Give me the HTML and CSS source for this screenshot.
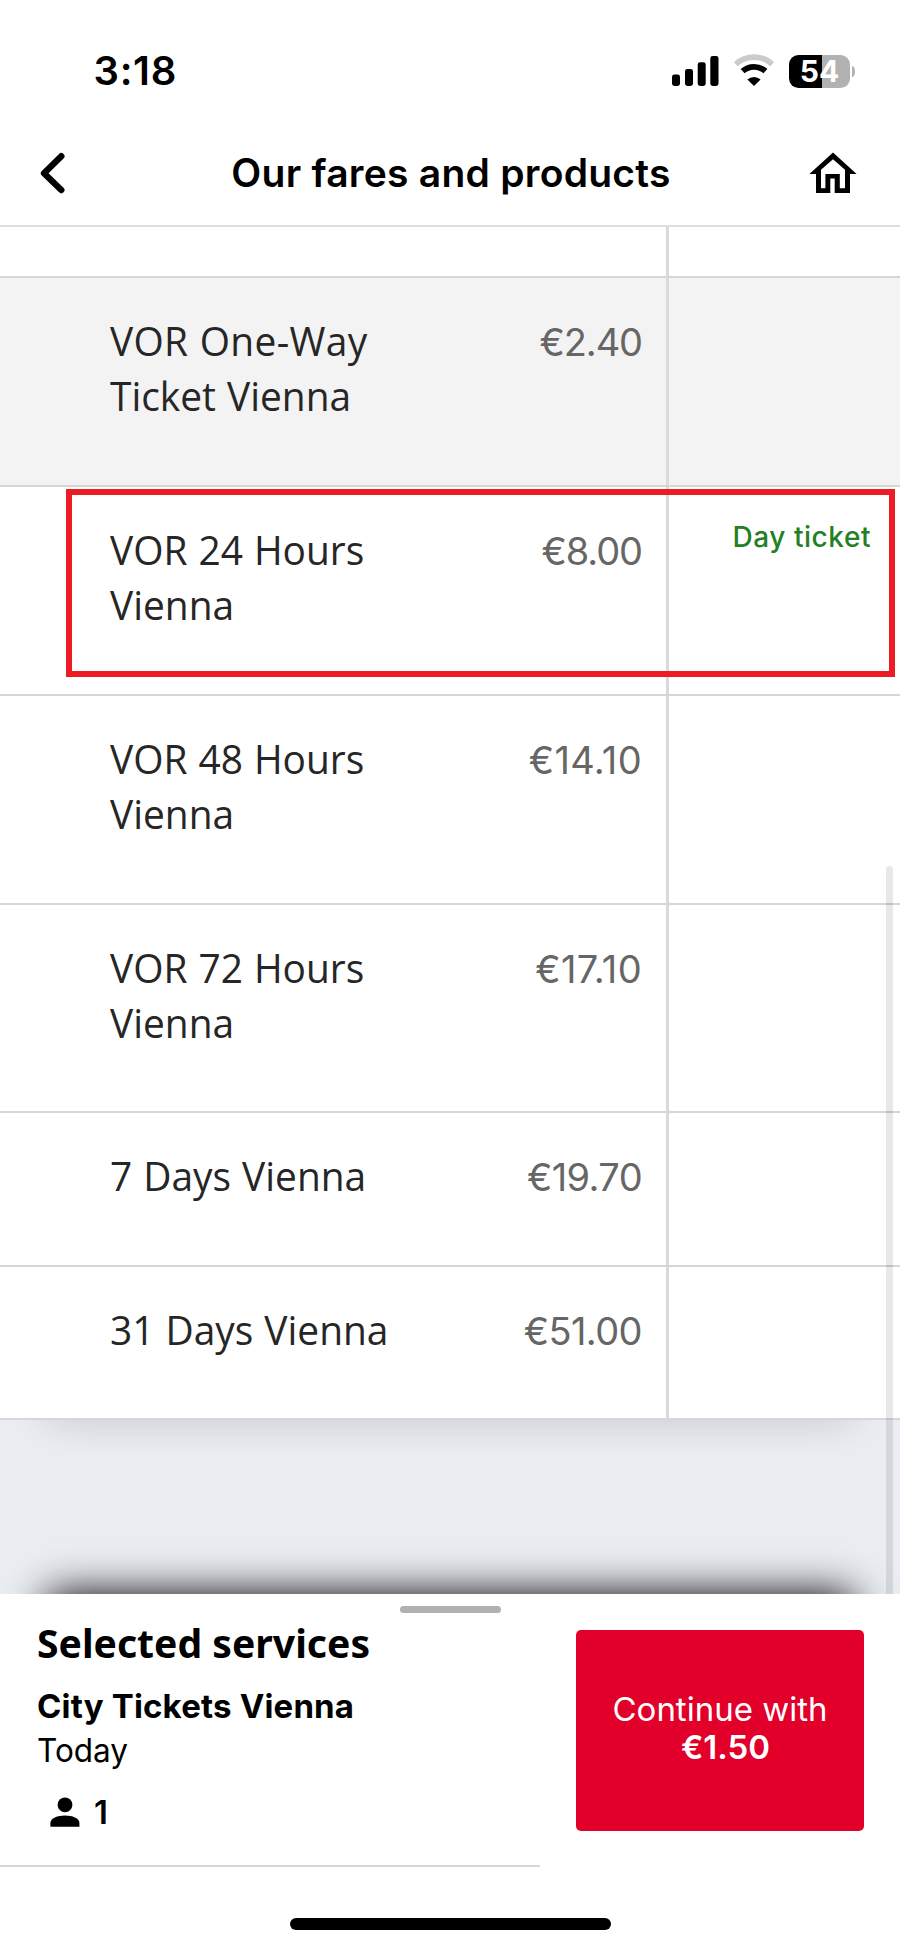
FILE: index.html
```html
<!DOCTYPE html>
<html lang="en">
<head>
<meta charset="utf-8">
<title>Our fares and products</title>
<link rel="stylesheet" href="styles.css">
</head>
<body>
<div class="screen">
  <div class="status">
    <span class="time">3:18</span>
    <div class="indicators">
      <svg class="signal" width="47" height="34" viewBox="0 0 47 34">
        <rect x="0" y="20.5" width="8" height="11.5" rx="2.4"/>
        <rect x="13" y="15" width="8" height="17" rx="2.4"/>
        <rect x="25.7" y="8.3" width="8" height="23.7" rx="2.4"/>
        <rect x="38.3" y="2" width="8.2" height="30" rx="2.4"/>
      </svg>
      <svg class="wifi" width="42" height="34" viewBox="0 0 42 34">
        <path d="M2.8 10.2 A27 27 0 0 1 39.2 10.2" fill="none" stroke="#cbcbcb" stroke-width="5.6"/>
        <path d="M9.6 17.2 A17 17 0 0 1 32.4 17.2" fill="none" stroke="#000" stroke-width="5.8"/>
        <path d="M21 32 L14.4 25.6 A9.8 9.8 0 0 1 27.6 25.6 Z"/>
      </svg>
      <div class="battery"><span class="battery-body">54</span><span class="battery-nub"></span></div>
    </div>
  </div>

  <header class="navbar">
    <svg width="26" height="42" viewBox="0 0 26 42"><path d="M21.3 4.2 L4 21.2 L21.3 38" fill="none" stroke="#000" stroke-width="6.4" stroke-linecap="round" stroke-linejoin="round"/></svg>
    <h1 class="title">Our fares and products</h1>
    <svg width="48" height="42" viewBox="0 0 48 42"><path fill-rule="evenodd" d="M24 0.6 L0.4 22 H7 V41 H21.3 V26.6 H25.7 V41 H41 V22 H47.6 Z M24 7.2 L36 17.8 V36.2 H30.8 V22 H16.4 V36.2 H12 V17.8 Z"/></svg>
  </header>

  <main class="scroll">
    <div class="fares">
      <div class="fare fare--partial"><div class="offer"></div><div class="note"></div></div>
      <div class="fare fare--shaded">
        <div class="offer"><span class="name"><span class="name-wide">VOR One-Way</span><br>Ticket Vienna</span><span class="price price--short">€2.40</span></div><div class="note"></div>
      </div>
      <div class="fare">
        <div class="offer"><span class="name">VOR 24 Hours<br>Vienna</span><span class="price price--short">€8.00</span></div><div class="note">Day ticket</div>
        <div class="highlight"></div>
      </div>
      <div class="fare">
        <div class="offer"><span class="name">VOR 48 Hours<br>Vienna</span><span class="price price--narrow-digits">€14.10</span></div><div class="note"></div>
      </div>
      <div class="fare fare--fourth">
        <div class="offer"><span class="name">VOR 72 Hours<br>Vienna</span><span class="price price--narrow-digits">€17.10</span></div><div class="note"></div>
      </div>
      <div class="fare fare--single">
        <div class="offer"><span class="name">7 Days Vienna</span><span class="price">€19.70</span></div><div class="note"></div>
      </div>
      <div class="fare fare--single fare--last">
        <div class="offer"><span class="name">31 Days Vienna</span><span class="price">€51.00</span></div><div class="note"></div>
      </div>
    </div>
    <div class="scrollbar"></div>
  </main>

  <section class="sheet">
    <div class="handle"></div>
    <div class="sheet-main">
      <div class="summary">
        <h2 class="sheet-title"><span class="condensed">Selected services</span></h2>
        <div class="ticket">City Tickets Vienna</div>
        <div class="date"><span class="condensed-date">Today</span></div>
        <div class="people">
          <svg width="30" height="30" viewBox="0 0 30 30"><circle cx="15" cy="7.8" r="7.4"/><path d="M.4 29.8 V25.8 C.4 21.4 7.6 18.6 15 18.6 S29.4 21.4 29.4 25.8 V29.8 Z"/></svg>
          <span>1</span>
        </div>
      </div>
      <button class="continue"><span>Continue with</span><b class="amount">€1.50</b></button>
    </div>
    <div class="home-indicator"></div>
  </section>
</div>
</body>
</html>
```
FILE: styles.css
```css
* { box-sizing: border-box; }
body { margin: 0; background: #fff; font-family: Inter, "Liberation Sans", sans-serif; color: #000; }
h1, h2 { margin: 0; }
svg { display: block; flex: none; }
.screen { width: 900px; height: 1948px; display: flex; flex-direction: column; overflow: hidden; }

.status { height: 141px; padding: 47px 45px 0 93.5px; display: flex; justify-content: space-between; align-items: flex-start; }
.time { font-size: 40px; font-weight: 600; line-height: 48px; letter-spacing: .7px; }
.indicators { display: flex; padding-top: 7px; }
.wifi { margin-left: 14px; }
.battery { display: flex; align-items: center; gap: 2px; margin-left: 14px; }
.battery-body { width: 61px; height: 33px; border-radius: 9.5px; background: linear-gradient(90deg, #000 33px, #b2b2b2 33px); color: #fff; font-size: 30px; font-weight: 700; line-height: 33px; text-align: center; }
.battery-nub { width: 3px; height: 11px; border-radius: 0 3px 3px 0 / 0 5.5px 5.5px 0; background: #b2b2b2; }

.navbar { height: 86px; padding: 10px 43px 0 40px; border-bottom: 2px solid #dedede; display: flex; justify-content: space-between; align-items: flex-start; }
.navbar svg { margin-top: 1px; }
.navbar svg:first-child { margin-right: 27px; }
.title { font-size: 39px; font-weight: 600; line-height: 48px; letter-spacing: .25px; margin-top: -2px; }

.scroll { position: relative; height: 1367px; background: #eaedf2; overflow: hidden; }
.fares { border-bottom: 2px solid #d6d8d8; box-shadow: 0 47px 40px -47px rgba(0, 0, 0, .17); }
.fare { position: relative; display: grid; grid-template-columns: 666px 234px; height: 209px; border-top: 2px solid #d6d6d6; background: #fff; }
.fare--partial { height: 49px; border-top: 0; }
.fare--shaded { background: #f3f3f3; }
.fare--fourth { height: 208px; }
.fare--single { height: 154px; }
.fare--last { height: 153px; }
.offer { display: flex; justify-content: space-between; align-items: baseline; padding: 34.5px 24px 0 110px; }
.name { font: 400 41px/55px "Open Sans", "Noto Sans", sans-serif; color: #262626; word-spacing: 1px; white-space: nowrap; transform: scaleX(.948); transform-origin: 0 0; }
.name-wide { letter-spacing: .35px; }
.price { font-size: 38px; line-height: 55px; color: #666; letter-spacing: -.6px; }
.price--short { letter-spacing: -1.1px; }
.price--narrow-digits { letter-spacing: .35px; }
.note { border-left: 3px solid #dadada; padding: 33px 29px 0 0; text-align: right; font-size: 28px; line-height: 34px; font-weight: 500; letter-spacing: .55px; color: #238023; }
.highlight { position: absolute; left: 66px; top: 2px; width: 829px; height: 188px; border: 6px solid #ed1c24; }
.scrollbar { position: absolute; left: 886px; top: 639px; width: 7px; height: 740px; border-radius: 3.5px; background: rgba(0, 0, 0, .09); }

.sheet { position: relative; flex: 1; background: #fff; padding-top: 11.5px; display: flex; flex-direction: column; box-shadow: 0 -47px 40px -47px #000; }
.handle { width: 101px; height: 7.5px; margin: 0 0 5px 400px; border-radius: 4px; background: #b1b1b1; flex: none; }
.sheet-main { display: flex; }
.summary { width: 540px; height: 249px; padding-left: 37px; border-bottom: 2px solid #d6d6d6; }
.sheet-title { font: 700 40px/50px "Noto Sans", sans-serif; margin-bottom: 16px; }
.condensed { display: inline-block; transform: scaleX(.978); transform-origin: 0 0; }
.ticket { font-size: 33px; line-height: 44px; font-weight: 700; letter-spacing: .17px; }
.date { font-size: 33px; line-height: 44px; }
.condensed-date { display: inline-block; transform: scaleX(.955); transform-origin: 0 0; }
.people { display: flex; align-items: center; gap: 14px; padding-left: 13px; margin-top: 18px; font-size: 33px; line-height: 44px; font-weight: 600; }
.continue { width: 288px; height: 201px; margin: 12px 0 0 36px; padding: 0 0 6px; border: 0; border-radius: 5px; background: #e2002a; color: #fff; font: 400 33px/38px Inter, sans-serif; display: flex; flex-direction: column; align-items: center; justify-content: center; }
.amount { font-weight: 600; padding-left: 11px; }
.home-indicator { width: 321px; height: 12px; margin: 51px 0 0 290px; border-radius: 6px; background: #000; }
```
